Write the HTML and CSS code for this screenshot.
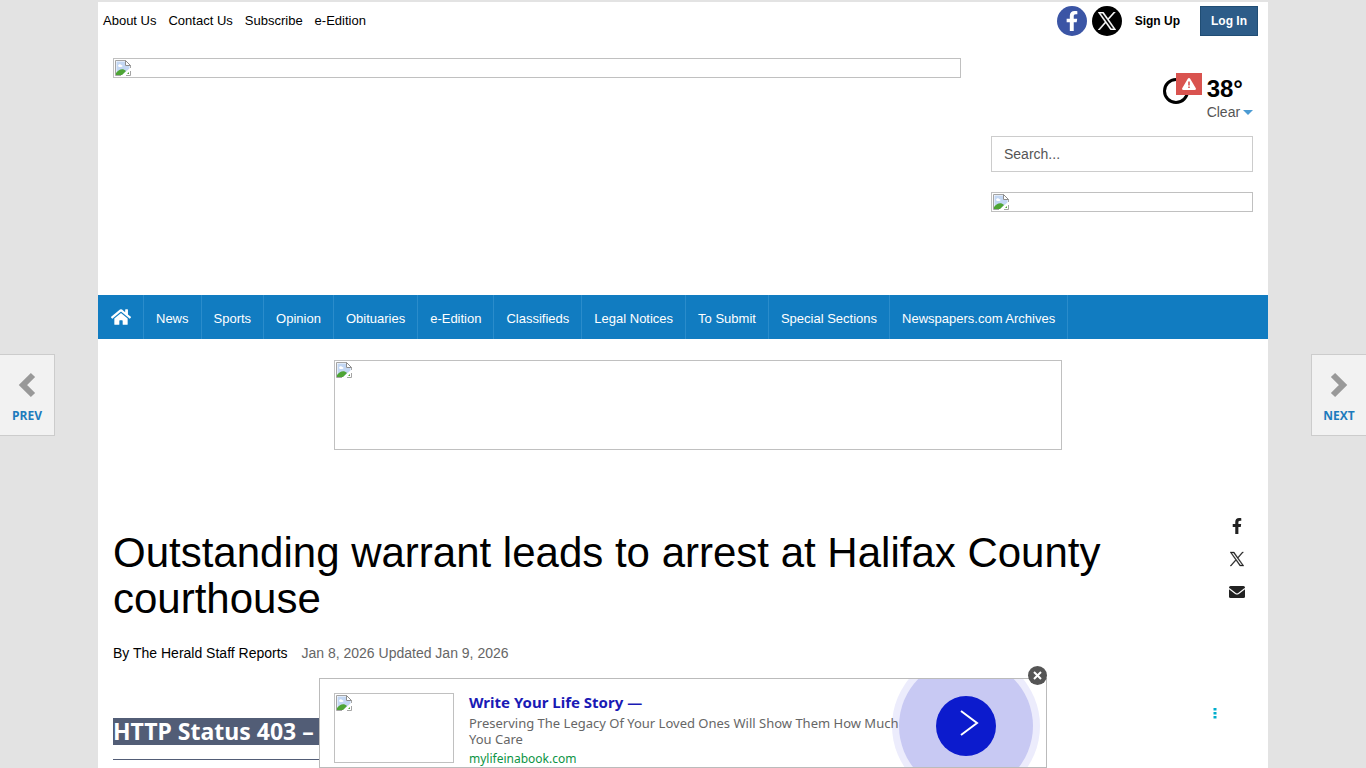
FILE: index.html
```
<!DOCTYPE html>
<html lang="en">
	<head>
		<meta charset="utf-8" />
		<title>Outstanding warrant leads to arrest at Halifax County courthouse</title>
		<link rel="stylesheet" href="styles.css">
	</head>
	<body>
		<svg class="defs" aria-hidden="true">
			<symbol id="broken" viewBox="0 0 16 16">
				<path d="M.5 15.500V.5h10l5 5V8" fill="#fff" stroke="#a4a4a4"/>
				<path d="M1.500 1.500h8.500v4.500h4.500v2.500l-7 6h-6z" fill="#c3d7f3"/>
				<path d="M3 6c0-2 3-2 3-1 2 0 2 2 0 2H4z" fill="#fff"/>
				<path d="M1 15v-2c3-4 7-5 10-2l-4 4z" fill="#4ea535"/>
				<path d="M10.500 .5v5h5z" fill="#fff" stroke="#8d8d8d"/>
				<path d="M.5 15.500H6M11 15.500h4.500V11" fill="none" stroke="#a4a4a4"/>
				<path d="M12 14l2-2v2z" fill="#4ea535"/>
			</symbol>
			<symbol id="facebook" viewBox="0 0 320 512">
				<path fill="currentColor" d="M279.140 288l14.220-92.660h-88.910v-60.130c0-25.350 12.420-50.060 52.240-50.060h40.420V6.260S260.430 0 225.360 0c-73.220 0-121.080 44.380-121.080 124.720v70.620H22.890V288h81.390v224h100.170V288z"/>
			</symbol>
			<symbol id="x" viewBox="0 0 24 24">
				<path fill="currentColor" stroke="currentColor" stroke-width=".6" d="M14.258 10.152L23.176 0h-2.113l-7.747 8.813L7.133 0H0l9.352 13.328L0 23.973h2.113l8.176-9.309 6.531 9.309h7.133zm-2.895 3.293l-.949-1.328L2.875 1.560h3.246l6.086 8.523.945 1.328 7.910 11.078h-3.246z"/>
			</symbol>
		</svg>

		<div class="page">
			<div class="topbar">
				<nav class="links">
					<a href="#">About Us</a>
					<a href="#">Contact Us</a>
					<a href="#">Subscribe</a>
					<a href="#">e-Edition</a>
				</nav>
				<div class="account">
					<a href="#" class="social fb" aria-label="Facebook"><svg><use href="#facebook"/></svg></a>
					<a href="#" class="social tw" aria-label="X"><svg><use href="#x"/></svg></a>
					<a href="#" class="signup">Sign Up</a>
					<button type="button" class="login">Log In</button>
				</div>
			</div>

			<header class="header">
				<a href="#" class="noimg banner" aria-label="Home"><svg><use href="#broken"/></svg></a>
				<div class="side">
					<div class="weather">
						<div class="sky">
							<svg class="moon" viewBox="0 0 26 26"><circle cx="13" cy="13" r="11.500" fill="none" stroke="#000" stroke-width="3"/></svg>
							<a href="#" class="alert" aria-label="Weather alert"><svg viewBox="0 0 14 12"><path d="M7 0q.8 0 1.200.7l5.600 9.600q.5 1.700-1.200 1.700H1.400Q-.3 12 .2 10.300L5.800.7Q6.200 0 7 0z" fill="#fff"/><path d="M6.200 3.500h1.600v4H6.200zM6.200 8.500h1.600V10H6.200z" fill="#d9534f"/></svg></a>
						</div>
						<div class="temp">
							<strong>38°</strong>
							<a href="#">Clear <span class="caret"></span></a>
						</div>
					</div>
					<input type="search" class="search" placeholder="Search..." aria-label="Search">
					<div class="noimg promo"><svg><use href="#broken"/></svg></div>
				</div>
			</header>

			<nav class="menu">
				<a href="#" class="home" aria-label="Home"><svg viewBox="0 0 576 512"><path fill="#fff" d="M280.370 148.260L96 300.110V464a16 16 0 0 0 16 16h112a16 16 0 0 0 16-16v-96a16 16 0 0 1 16-16h64a16 16 0 0 1 16 16v96a16 16 0 0 0 16 16h112a16 16 0 0 0 16-16V300L295.670 148.260a12.190 12.190 0 0 0-15.300 0zM571.600 251.470L488 182.560V44a12 12 0 0 0-12-12h-56a12 12 0 0 0-12 12v72.600l-89.500-73.600a48 48 0 0 0-61 0L4.340 251.470a12 12 0 0 0-1.600 16.900l25.500 31a12 12 0 0 0 16.900 1.600L280.500 107a12.200 12.200 0 0 1 15.300 0l235.400 194a12 12 0 0 0 16.900-1.600l25.500-31a12 12 0 0 0-2-16.930z"/></svg></a>
				<a href="#">News</a>
				<a href="#">Sports</a>
				<a href="#">Opinion</a>
				<a href="#">Obituaries</a>
				<a href="#">e-Edition</a>
				<a href="#">Classifieds</a>
				<a href="#">Legal Notices</a>
				<a href="#">To Submit</a>
				<a href="#">Special Sections</a>
				<a href="#">Newspapers.com Archives</a>
			</nav>

			<div class="leader">
				<div class="noimg"><svg><use href="#broken"/></svg></div>
			</div>

			<main class="article">
				<div class="story">
					<h1>Outstanding warrant leads to arrest at Halifax County courthouse</h1>
					<p class="meta"><span class="by">By The Herald Staff Reports</span> <span>Jan 8, 2026 Updated Jan 9, 2026</span></p>
					<div class="status">
						<h2>HTTP Status 403 –</h2>
						<hr>
					</div>
				</div>
				<div class="share">
					<a href="#" aria-label="Facebook"><svg><use href="#facebook"/></svg></a>
					<a href="#" aria-label="X"><svg class="small"><use href="#x"/></svg></a>
					<a href="#" aria-label="Email"><svg viewBox="0 0 16 12"><rect width="16" height="12" rx="1.500" fill="#222"/><path d="M0 2.500l6.500 5q1.500 1 3 0l6.500-5" fill="none" stroke="#fff" stroke-width="1.200"/></svg></a>
					<button type="button" class="dots" aria-label="Ad options"><svg viewBox="0 0 4 12"><path fill="#00aecd" d="M.5 1h3v2.500h-3zM.5 5h3v2.500h-3zM.5 9h3v2.500h-3z"/></svg></button>
				</div>
			</main>
		</div>

		<a href="#" class="pager prev"><svg viewBox="0 0 18 26"><path d="M15 3L5 13l10 10"/></svg>PREV</a>
		<a href="#" class="pager next"><svg viewBox="0 0 18 26"><path d="M3 3l10 10L3 23"/></svg>NEXT</a>

		<aside class="ad">
			<div class="ad-body">
				<div class="noimg thumb"><svg><use href="#broken"/></svg></div>
				<div class="copy">
					<a href="#" class="title">Write Your Life Story —</a>
					<p>Preserving The Legacy Of Your Loved Ones Will Show Them How Much You Care</p>
					<a href="#" class="site">mylifeinabook.com</a>
				</div>
				<div class="glow">
					<button type="button" aria-label="Open"><svg viewBox="0 0 60 60"><path d="M25 15l16 12-16 12" fill="none" stroke="#fff" stroke-width="2"/></svg></button>
				</div>
			</div>
			<button type="button" class="close" aria-label="Close"><svg viewBox="0 0 19 19"><path d="M6 6l7 7M13 6l-7 7" stroke="#fff" stroke-width="2"/></svg></button>
		</aside>
	</body>
</html>
```
FILE: styles.css
```
*{
	box-sizing: border-box;
}
body{
	margin: 0;
	padding-top: 2px;
	background: #e3e3e3;
	color: #000;
	font: 14px/20px "Liberation Sans", Arial, sans-serif;
}
a{
	color: inherit;
	text-decoration: none;
}
button{
	border: 0;
	padding: 0;
	font: inherit;
	cursor: pointer;
}
svg{
	display: block;
}
.defs{
	position: absolute;
	width: 0;
	height: 0;
}
.page{
	max-width: 1170px;
	min-height: 1200px;
	margin: 0 auto;
	background: #fff;
}

/* empty picture frame */
.noimg{
	display: block;
	border: 1px solid #c0c0c0;
	padding: 1px;
}
.noimg svg{
	width: 16px;
	height: 16px;
}

/* top bar */
.topbar{
	display: flex;
	justify-content: space-between;
	padding: 4px 10px 0 5px;
	font-size: 13px;
}
.links{
	display: flex;
	gap: 12px;
	padding-top: 5px;
}
.account{
	display: flex;
	align-items: center;
	font-size: 12px;
	font-weight: bold;
}
.social{
	display: flex;
	align-items: center;
	justify-content: center;
	width: 30px;
	height: 30px;
	margin-right: 5px;
	border-radius: 50%;
	background: #000;
	color: #fff;
}
.social svg{
	width: 18px;
	height: 18px;
}
.social.fb{
	background: #3b55a5;
}
.social.fb svg{
	height: 20px;
}
.signup{
	margin: 0 20px 0 8px;
}
.login{
	width: 58px;
	height: 30px;
	border: 1px solid #204d74;
	background: #2d5c88;
	color: #fff;
}

/* header */
.header{
	display: grid;
	grid-template-columns: 1fr 262px;
	gap: 30px;
	align-items: start;
	min-height: 259px;
	padding: 22px 15px 0;
}
.weather{
	display: flex;
	justify-content: flex-end;
	gap: 5px;
	padding: 15px 0 16px;
}
.sky{
	position: relative;
	width: 39px;
	height: 32px;
}
.moon{
	width: 26px;
	height: 26px;
	margin-top: 5px;
}
.alert{
	position: absolute;
	top: 0;
	right: 0;
	padding: 5px 6px;
	background: #d9534f;
}
.alert svg{
	width: 14px;
	height: 12px;
}
.temp{
	color: #555;
}
.temp strong{
	display: block;
	color: #000;
	font-size: 24px;
	line-height: 32px;
}
.temp a{
	display: block;
	line-height: 15px;
}
.caret{
	display: inline-block;
	border: 5px solid transparent;
	border-top-color: #4c9bd3;
	border-bottom: 0;
	margin-left: -1px;
	vertical-align: 2px;
}
.search{
	display: block;
	width: 100%;
	height: 36px;
	padding: 0 12px;
	border: 1px solid #ccc;
	background: #fff;
	font: inherit;
}
.search::placeholder{
	color: #555;
}
.promo{
	margin-top: 20px;
}

/* menu */
.menu{
	display: flex;
	height: 44px;
	background: #117cc1;
	color: #fff;
	font-size: 13px;
	line-height: 48px;
}
.menu a{
	padding: 0 12px;
	border-right: 1px solid #2a8ccb;
}
.menu .home{
	padding: 13px 12px 0 13px;
}
.menu svg{
	width: 20px;
	height: 18px;
}
.leader{
	padding: 21px 0 0 30px;
}
.leader .noimg{
	width: 728px;
	height: 90px;
	margin: 0 auto;
}

/* article */
.article{
	display: flex;
	padding: 68px 15px 0;
}
.story{
	flex: 1;
}
h1{
	margin: 12px 0 21px;
	font-size: 42px;
	font-weight: normal;
	line-height: 46px;
}
.meta{
	margin: 0;
	color: #666;
}
.by{
	margin-right: 10px;
	color: #000;
}
.status{
	width: 70%;
	margin-top: 55px;
}
.status h2{
	margin: 0;
	background: #525d76;
	color: #fff;
	font: bold 23px/27px "Noto Sans", Tahoma, sans-serif;
}
.status hr{
	height: 1px;
	margin: 14px 0;
	border: 0;
	background: #525d76;
}
.share{
	display: flex;
	flex-direction: column;
	align-items: center;
	gap: 17px;
	width: 32px;
	color: #222;
}
.share svg{
	width: 16px;
	height: 16px;
}
.share .small{
	width: 14px;
}
.share .dots{
	align-self: flex-start;
	margin: 88px 0 0 -8px;
	background: none;
}
.share .dots svg{
	width: 4px;
}

/* prev and next story */
.pager{
	position: fixed;
	top: 354px;
	width: 55px;
	height: 82px;
	padding-top: 17px;
	border: 1px solid #ccc;
	background: #f2f2f2;
	color: #1d7bbd;
	font: bold 12px/19px "Open Sans", sans-serif;
	text-align: center;
}
.pager svg{
	width: 18px;
	height: 26px;
	margin: 0 auto 8px;
	fill: none;
	stroke: #999;
	stroke-width: 6px;
}
.prev{
	left: 0;
	border-left: 0;
}
.next{
	right: 0;
	border-right: 0;
}

/* sticky ad */
.ad{
	position: fixed;
	bottom: 0;
	left: 50%;
	width: 728px;
	margin-left: -364px;
}
.ad-body{
	position: relative;
	display: flex;
	height: 90px;
	overflow: hidden;
	padding: 14px;
	border: 1px solid #bbb;
	background: #fff;
	font: 13px/16px "Noto Sans", "Trebuchet MS", sans-serif;
}
.thumb{
	width: 120px;
	height: 70px;
}
.copy{
	position: relative;
	z-index: 1;
	width: 450px;
	margin-left: 15px;
	color: #666;
}
.copy .title{
	display: block;
	color: #1a1ab5;
	font-size: 15px;
	font-weight: bold;
	line-height: 18px;
}
.copy p{
	margin: 4px 0;
}
.copy .site{
	display: block;
	color: #0b9444;
	font-size: 12px;
}
/* halo round the arrow, cut by the ad frame */
.glow{
	position: absolute;
	top: -20px;
	right: 13px;
	display: flex;
	align-items: center;
	justify-content: center;
	width: 134px;
	height: 134px;
	border-radius: 50%;
	background: #c8c9f3;
	box-shadow: 0 0 0 7px #ececfc;
}
.glow button{
	width: 60px;
	height: 60px;
	border-radius: 50%;
	background: #0c1bcd;
}
.close{
	position: absolute;
	top: -12px;
	right: 0;
	width: 19px;
	height: 19px;
	border-radius: 50%;
	background: #555;
}
```
